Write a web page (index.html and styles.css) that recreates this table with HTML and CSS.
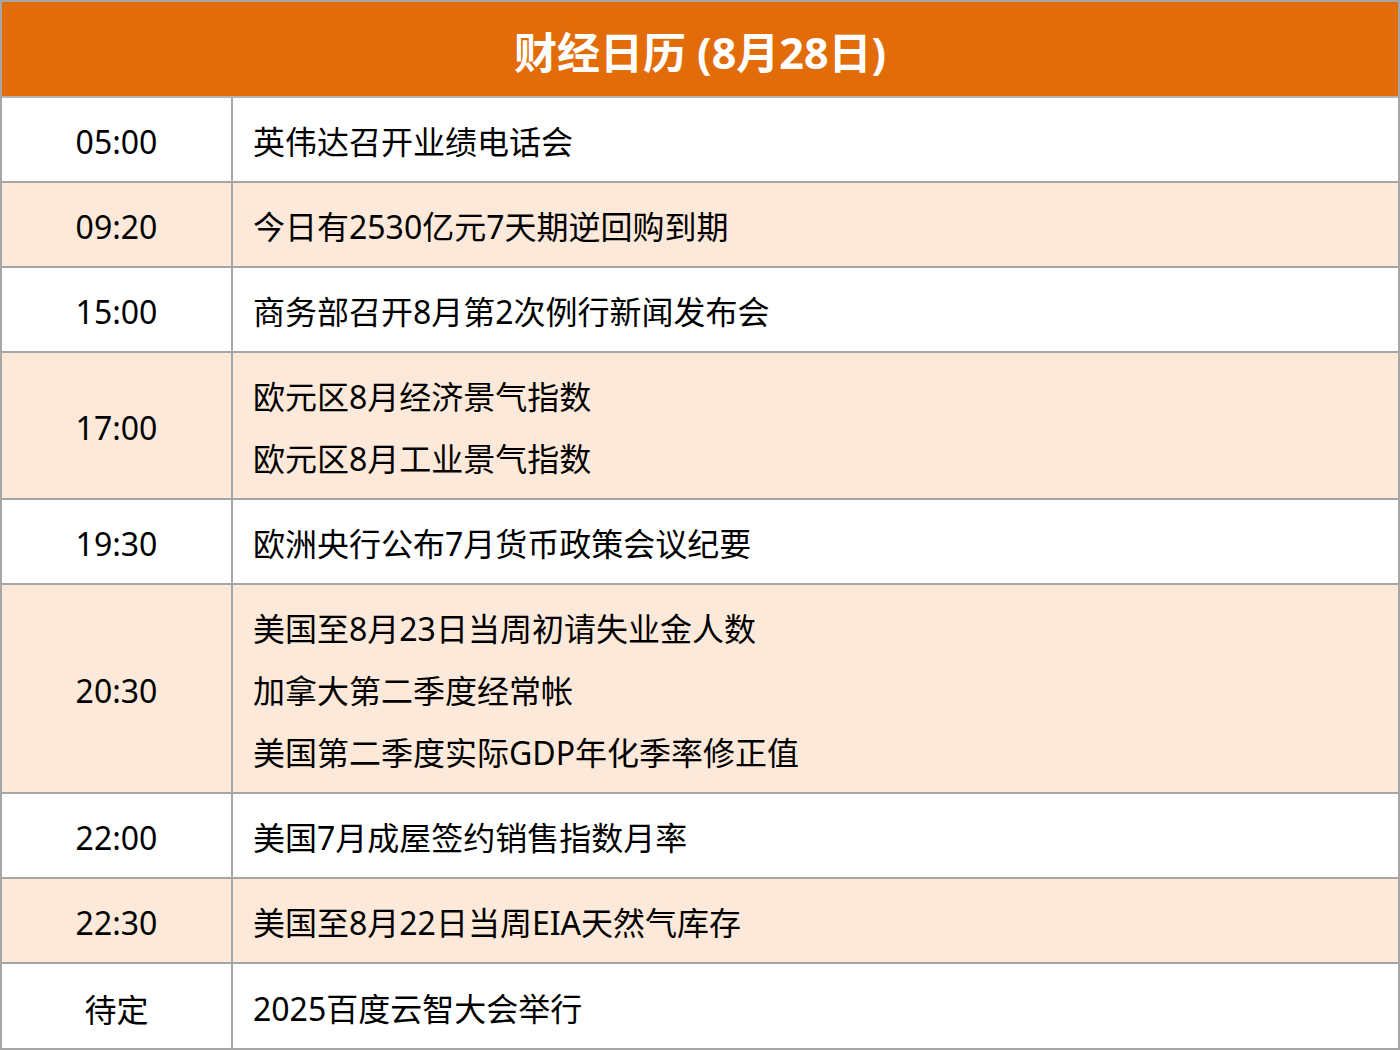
FILE: index.html
```html
<!DOCTYPE html>
<html lang="zh-CN">
<head>
<meta charset="utf-8">
<title>财经日历</title>
<link rel="stylesheet" href="styles.css">
</head>
<body>
<div class="cal">
  <div class="head">财经日历 (8月28日)</div>
  <div class="row">
    <div class="time">05:00</div>
    <div class="desc"><div class="ln">英伟达召开业绩电话会</div></div>
  </div>
  <div class="row alt">
    <div class="time">09:20</div>
    <div class="desc"><div class="ln">今日有2530亿元7天期逆回购到期</div></div>
  </div>
  <div class="row">
    <div class="time">15:00</div>
    <div class="desc"><div class="ln">商务部召开8月第2次例行新闻发布会</div></div>
  </div>
  <div class="row alt">
    <div class="time">17:00</div>
    <div class="desc"><div class="ln">欧元区8月经济景气指数</div><div class="ln">欧元区8月工业景气指数</div></div>
  </div>
  <div class="row">
    <div class="time">19:30</div>
    <div class="desc"><div class="ln">欧洲央行公布7月货币政策会议纪要</div></div>
  </div>
  <div class="row alt">
    <div class="time">20:30</div>
    <div class="desc"><div class="ln">美国至8月23日当周初请失业金人数</div><div class="ln">加拿大第二季度经常帐</div><div class="ln">美国第二季度实际GDP年化季率修正值</div></div>
  </div>
  <div class="row">
    <div class="time">22:00</div>
    <div class="desc"><div class="ln">美国7月成屋签约销售指数月率</div></div>
  </div>
  <div class="row alt">
    <div class="time">22:30</div>
    <div class="desc"><div class="ln">美国至8月22日当周EIA天然气库存</div></div>
  </div>
  <div class="row last">
    <div class="time">待定</div>
    <div class="desc"><div class="ln">2025百度云智大会举行</div></div>
  </div>
</div>
</body>
</html>
```
FILE: styles.css
```css
html, body {
  margin: 0;
  padding: 0;
  background: #ffffff;
}
.cal {
  width: 1400px;
  height: 1050px;
  box-sizing: border-box;
  border: 2px solid #a6a6a6;
  display: flex;
  flex-direction: column;
  font-family: "Noto Sans", "Noto Sans CJK SC", sans-serif;
  color: #000;
}
.head {
  box-sizing: border-box;
  border-bottom: 2px solid #b4b4b4;
  height: 96px;
  background: #e36c0a;
  color: #fff;
  font-weight: 700;
  font-size: 43px;
  display: flex;
  align-items: center;
  justify-content: center;
  padding-top: 3px;
}
.row {
  display: flex;
  box-sizing: border-box;
  border-bottom: 2px solid #a6a6a6;
  background: #fff;
}
.row.alt {
  background: #fde9d9;
}
.row.last {
  border-bottom: none;
  flex: 1;
}
.time {
  width: 231px;
  flex: none;
  box-sizing: border-box;
  border-right: 2px solid #a6a6a6;
  display: flex;
  align-items: center;
  justify-content: center;
  font-size: 32px;
  padding-top: 4px;
}
.desc {
  flex: 1;
  padding: 13px 0 8px 20px;
  display: flex;
  flex-direction: column;
  justify-content: center;
  font-size: 32px;
}
.ln {
  height: 62px;
  line-height: 62px;
  white-space: nowrap;
}
```
